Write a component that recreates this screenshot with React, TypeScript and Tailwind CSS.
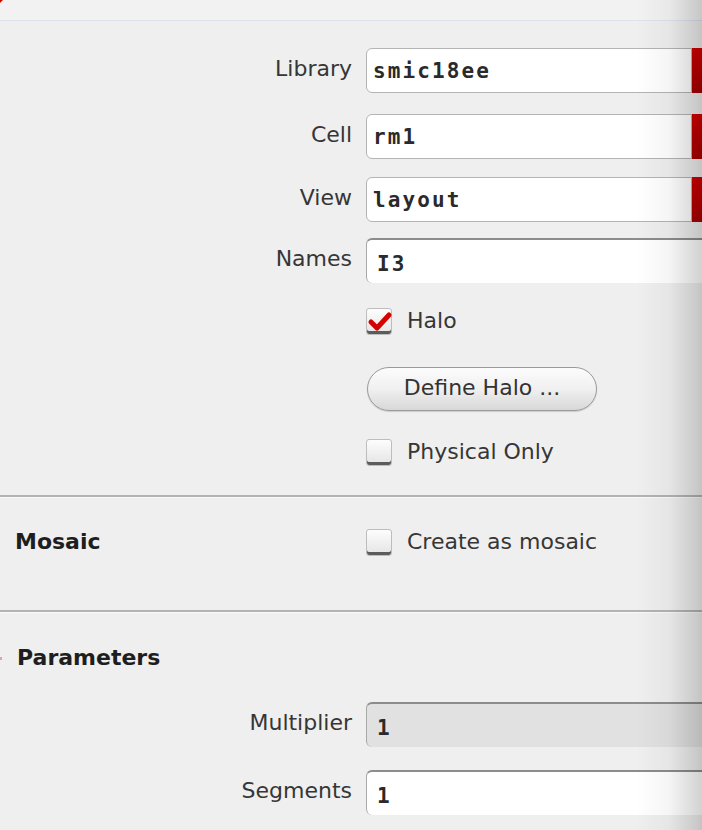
import React from "react"

function Field({
  label,
  value,
  top,
  dropdown = false,
  disabled = false,
  inset = false,
}: {
  label: string
  value: string
  top: number
  dropdown?: boolean
  disabled?: boolean
  inset?: boolean
}) {
  return (
    <div className="flex items-center h-[45px]" style={{ marginTop: top }}>
      <div className="w-[352px] shrink-0 text-right pb-[3px]">{label}</div>
      <div className="flex h-full ml-[14px]">
        <div
          className={
            (dropdown ? "w-[326px] " : "w-[360px] ") +
            (disabled ? "bg-[#e1e1e1] " : "bg-white ") +
            (inset
              ? "border-t-2 border-t-[#8c8c8c] border-l border-l-[#a8a8a8] pt-[6px] pl-[10px] "
              : "border border-[#b4b4b4] pt-[2px] pl-[6px] ") +
            "rounded-l-[6px] flex items-center font-['DejaVu_Sans_Mono',monospace] font-bold text-[21px] tracking-[2.1px] text-[#2a2a2a]"
          }
        >
          {value}
        </div>
        {dropdown && (
          <div className="w-[20px] bg-gradient-to-b from-[#d40000] to-[#a80000]" />
        )}
      </div>
    </div>
  )
}

function Check({ checked = false }: { checked?: boolean }) {
  return (
    <span className="relative w-[26px] h-[27px] shrink-0 rounded-[3px] border border-[#bdbdbd] bg-gradient-to-b from-[#fdfdfd] to-[#e4e4e4] shadow-[inset_0_-3px_0_#5c5c5c]">
      {checked && (
        <svg
          className="absolute left-0 top-0"
          width="26"
          height="26"
          viewBox="0 0 26 26"
        >
          <polyline
            points="4,13 10,19 22,6"
            fill="none"
            stroke="#d60000"
            strokeWidth="5"
            strokeLinecap="round"
            strokeLinejoin="round"
          />
        </svg>
      )}
    </span>
  )
}

function CheckRow({
  label,
  checked,
  top,
  left = 366,
}: {
  label: string
  checked?: boolean
  top: number
  left?: number
}) {
  return (
    <div
      className="flex items-center gap-[15px] h-[27px]"
      style={{ marginTop: top, marginLeft: left }}
    >
      <Check checked={checked} />
      <span className="pb-[2px]">{label}</span>
    </div>
  )
}

function Separator({ top }: { top: number }) {
  return (
    <div style={{ marginTop: top }}>
      <div className="h-[2px] bg-[#b3b3b3]" />
      <div className="h-[1px] bg-[#fafafa]" />
    </div>
  )
}

export default function App() {
  return (
    <div className="relative w-[702px] h-[830px] overflow-hidden bg-[#efefef] font-['DejaVu_Sans',sans-serif] text-[22px] text-[#363636] leading-none">
      {/* title strip */}
      <div className="relative h-[21px] bg-[#f2f2f2] border-b border-[#dbe3ee]">
        <svg className="absolute left-0 top-0" width="4" height="4" viewBox="0 0 4 4">
          <polygon points="0,0 3,0 0,3" fill="#e00000" />
        </svg>
      </div>

      <Field label="Library" value="smic18ee" top={27} dropdown />
      <Field label="Cell" value="rm1" top={21} dropdown />
      <Field label="View" value="layout" top={18} dropdown />
      <Field label="Names" value="I3" top={16} inset />

      <CheckRow label="Halo" checked top={25} />

      <div className="ml-[367px] mt-[32px]">
        <button className="w-[230px] h-[44px] rounded-full border border-[#9a9a9a] bg-gradient-to-b from-[#fcfcfc] via-[#f0f0f0] to-[#d8d8d8] shadow-[0_1px_1px_rgba(0,0,0,0.15)] text-[22px] text-[#333] pb-[3px]">
          Define Halo ...
        </button>
      </div>

      <CheckRow label="Physical Only" top={28} />

      <Separator top={29} />

      {/* Mosaic */}
      <div className="flex items-center h-[27px] mt-[31px]">
        <div className="w-[366px] shrink-0 pl-[15px] font-bold text-[#1e1e1e] pb-[2px]">
          Mosaic
        </div>
        <Check />
        <span className="ml-[15px] pb-[2px]">Create as mosaic</span>
      </div>

      <Separator top={54} />

      {/* Parameters */}
      <div className="relative flex items-center h-[27px] mt-[32px]">
        <span className="absolute left-0 top-[12px] w-[2px] h-[3px] bg-[#e8a0a0]" />
        <div className="pl-[17px] font-bold text-[#1e1e1e] pb-[2px]">Parameters</div>
      </div>

      <Field label="Multiplier" value="1" top={30} inset disabled />
      <Field label="Segments" value="1" top={23} inset />

      {/* right edge shade */}
      <div className="pointer-events-none absolute top-0 right-0 h-full w-[66px] bg-gradient-to-r from-transparent via-[rgba(0,0,0,0.04)] to-[rgba(0,0,0,0.18)]" />
    </div>
  )
}
